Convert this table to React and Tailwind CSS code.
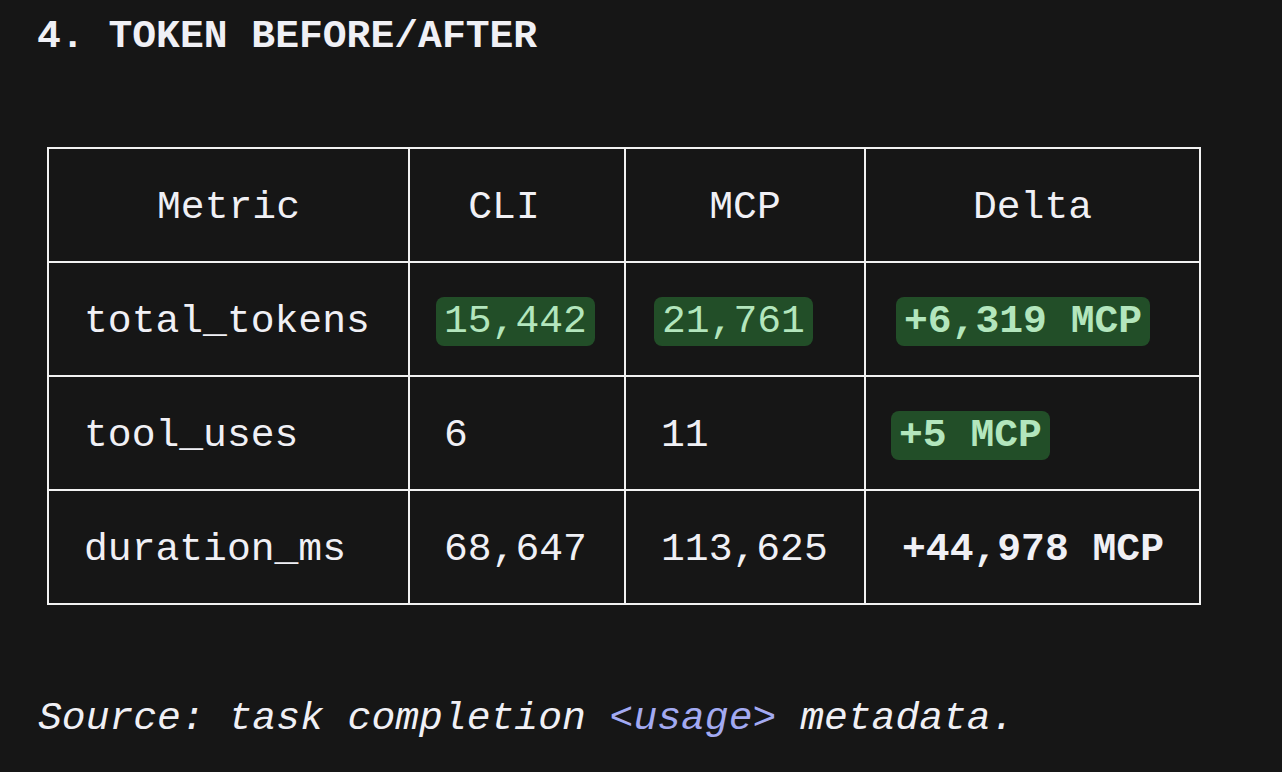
export default function App() {
  const mono = { fontFamily: '"Liberation Mono", "DejaVu Sans Mono", monospace' };
  const badge = "inline-block rounded-[8px] bg-[#224e28] text-[#b3e6bd] px-[8px] -ml-[8px] leading-[49px]";
  const cell = "border-2 border-[#f2f2f2] pt-[6px]";
  return (
    <div className="w-[1282px] h-[772px] bg-[#161616] text-[#f0f0f5] overflow-hidden text-[39.7px]" style={mono}>
      <div className="pl-[37px] pt-[15px] font-bold leading-[44px]">4. TOKEN BEFORE/AFTER</div>
      <div className="pl-[47px] pt-[88px]">
        <table className="table-fixed border-collapse w-[1152px]">
          <colgroup>
            <col className="w-[361px]" />
            <col className="w-[216px]" />
            <col className="w-[240px]" />
            <col className="w-[335px]" />
          </colgroup>
          <thead>
            <tr className="h-[114px]">
              <th className={cell + " font-normal text-center"}>Metric</th>
              <th className={cell + " font-normal text-center pr-[26px]"}>CLI</th>
              <th className={cell + " font-normal text-center"}>MCP</th>
              <th className={cell + " font-normal text-center"}>Delta</th>
            </tr>
          </thead>
          <tbody>
            <tr className="h-[114px]">
              <td className={cell + " pl-[35px]"}>total_tokens</td>
              <td className={cell + " pl-[34px]"}><span className={badge}>15,442</span></td>
              <td className={cell + " pl-[36px]"}><span className={badge}>21,761</span></td>
              <td className={cell + " pl-[38px]"}><span className={badge + " font-bold"}>+6,319 MCP</span></td>
            </tr>
            <tr className="h-[114px]">
              <td className={cell + " pl-[35px]"}>tool_uses</td>
              <td className={cell + " pl-[34px]"}>6</td>
              <td className={cell + " pl-[35px]"}>11</td>
              <td className={cell + " pl-[33px]"}><span className={badge + " font-bold"}>+5 MCP</span></td>
            </tr>
            <tr className="h-[114px]">
              <td className={cell + " pl-[35px]"}>duration_ms</td>
              <td className={cell + " pl-[34px]"}>68,647</td>
              <td className={cell + " pl-[35px]"}>113,625</td>
              <td className={cell + " pl-[36px] font-bold"}>+44,978 MCP</td>
            </tr>
          </tbody>
        </table>
      </div>
      <div className="pl-[38px] pt-[92px] italic leading-[44px]">
        Source: task completion <span className="text-[#a3aaf2]">&lt;usage&gt;</span> metadata.
      </div>
    </div>
  );
}
